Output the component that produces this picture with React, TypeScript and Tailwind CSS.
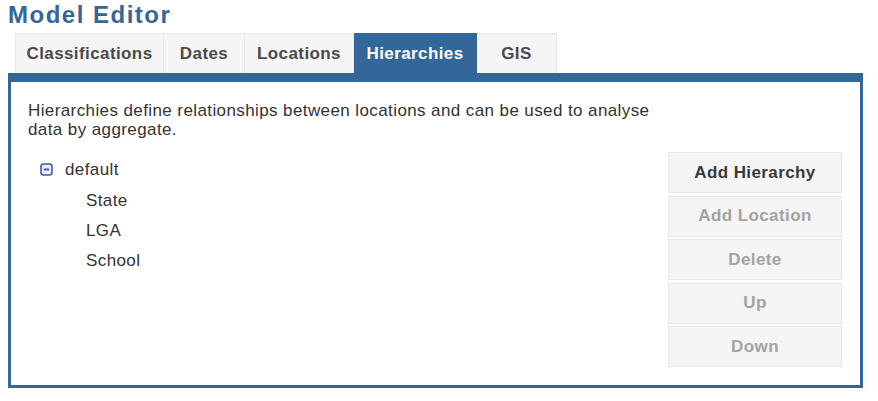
const tabs = [
  { label: "Classifications", width: "w-[149px]" },
  { label: "Dates", width: "w-[81px]" },
  { label: "Locations", width: "w-[109px]" },
  { label: "Hierarchies", width: "w-[123px]", active: true },
  { label: "GIS", width: "w-[80px]" },
];

const buttons = [
  { label: "Add Hierarchy", enabled: true },
  { label: "Add Location" },
  { label: "Delete" },
  { label: "Up" },
  { label: "Down" },
];

const levels = ["State", "LGA", "School"];

function CollapseIcon() {
  return (
    <svg width="13" height="13" viewBox="0 0 13 13" className="shrink-0">
      <rect
        x="1"
        y="1"
        width="11"
        height="11"
        rx="2.5"
        fill="#eef1fb"
        stroke="#3f58b8"
        strokeWidth="1.6"
      />
      <line x1="3.8" y1="6.5" x2="9.2" y2="6.5" stroke="#3f58b8" strokeWidth="2" />
    </svg>
  );
}

export default function App() {
  return (
    <div className="w-[878px] h-[401px] bg-white font-['Liberation_Sans',Arial,sans-serif] text-[#333] tracking-[0.4px]">
      <h1 className="pl-[8px] pt-[1px] h-[33px] text-[24px] leading-[28px] font-bold tracking-[1.5px] text-[#336699]">
        Model Editor
      </h1>

      <div className="flex pl-[15px] h-[40px]">
        {tabs.map((tab) => (
          <div
            key={tab.label}
            className={`${tab.width} flex items-center justify-center text-[17px] font-bold border-t border-r first:border-l ${
              tab.active
                ? "bg-[#336699] text-white border-[#336699]"
                : "bg-[#f5f5f5] text-[#4a4a4a] border-[#e6e6e6]"
            }`}
          >
            {tab.label}
          </div>
        ))}
      </div>

      <div className="ml-[8px] w-[855px] h-[315px] border-[3px] border-t-[9px] border-[#336699] pl-[17px] pr-[18px] pt-[19px]">
        <p className="max-w-[640px] text-[17px] leading-[19px]">
          Hierarchies define relationships between locations and can be used
          to analyse data by aggregate.
        </p>

        <div className="flex justify-between mt-[13px]">
          <div className="pt-[1.5px] text-[17px]">
            <div className="flex items-center h-[32px] pl-[12px] gap-[12px]">
              <CollapseIcon />
              <span className="leading-[30px]">default</span>
            </div>
            <ul className="pl-[58px]">
              {levels.map((level) => (
                <li key={level} className="leading-[30px]">
                  {level}
                </li>
              ))}
            </ul>
          </div>

          <div className="flex flex-col gap-[2.5px] w-[174px]">
            {buttons.map((btn) => (
              <button
                key={btn.label}
                className={`h-[41px] w-full bg-[#f5f5f5] border border-[#e6e6e6] text-[17px] font-bold ${
                  btn.enabled ? "text-[#3a3a3a]" : "text-[#a3a3a3]"
                }`}
              >
                {btn.label}
              </button>
            ))}
          </div>
        </div>
      </div>
    </div>
  );
}
